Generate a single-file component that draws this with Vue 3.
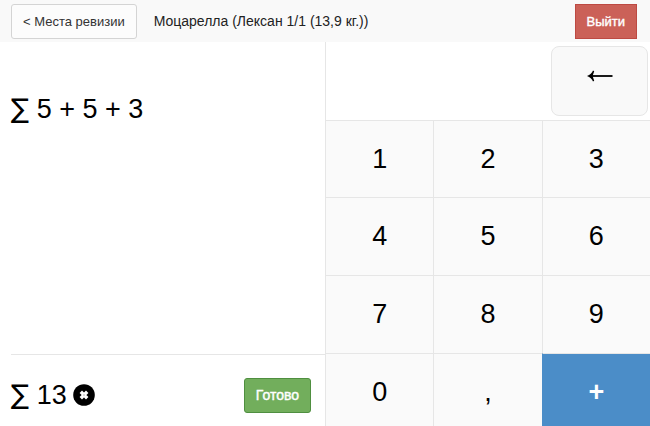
<template>
  <div class="page">
    <header class="topbar">
      <button class="btn btn-default" type="button">&lt; Места ревизии</button>
      <h1 class="title">Моцарелла (Лексан 1/1 (13,9 кг.))</h1>
      <button class="btn btn-danger" type="button">Выйти</button>
    </header>

    <main class="calc">
      <section class="display">
        <p class="expression"><span class="sigma">∑</span> {{ expression }}</p>
        <div class="result">
          <span><span class="sigma">∑</span> {{ total }}</span>
          <button class="clear" type="button" aria-label="Очистить" @click="clear">
            <svg viewBox="0 0 22 22" width="22" height="22">
              <circle cx="11" cy="11" r="10.8" />
              <path d="M7.8 7.8l6.4 6.4M14.2 7.8l-6.4 6.4" stroke="#fff" stroke-width="3.4" />
              <circle cx="11" cy="11" r="0.7" fill="#999" />
            </svg>
          </button>
          <button class="btn btn-success" type="button">Готово</button>
        </div>
      </section>

      <section class="keypad">
        <div class="keypad-top">
          <button class="backspace" type="button" aria-label="Стереть" @click="backspace">
            <svg viewBox="0 0 26 12" width="26" height="12">
              <path d="M4 6h21.5" stroke="#000" stroke-width="1.8" />
              <path d="M0 6C3 5 5 3 6 0.6L7.2 1.2L5.6 6L7.2 10.8L6 11.4C5 9 3 7 0 6z" />
            </svg>
          </button>
        </div>
        <button
          v-for="key in keys"
          :key="key"
          :class="['key', { plus: key === '+' }]"
          type="button"
          @click="press(key)"
        >{{ key }}</button>
      </section>
    </main>
  </div>
</template>

<script setup>
import { ref, computed } from 'vue'

const keys = ['1', '2', '3', '4', '5', '6', '7', '8', '9', '0', ',', '+']
const terms = ref(['5', '5', '3'])

const expression = computed(() => terms.value.join(' + '))
const total = computed(() => {
  const sum = terms.value.reduce((acc, t) => acc + (Number(t.replace(',', '.')) || 0), 0)
  return String(sum).replace('.', ',')
})

function press(key) {
  const last = terms.value.length - 1
  if (key === '+') {
    if (terms.value[last]) terms.value.push('')
  } else if (key !== ',' || !terms.value[last].includes(',')) {
    terms.value[last] += key
  }
}

function backspace() {
  const last = terms.value.length - 1
  if (terms.value[last]) {
    terms.value[last] = terms.value[last].slice(0, -1)
  } else if (last > 0) {
    terms.value.pop()
  }
}

function clear() {
  terms.value = ['']
}
</script>

<style>
body {
  overflow: hidden;
}
</style>

<style scoped>
.page {
  min-height: 100vh;
  background: #fff;
  color: #000;
  font-family: "Liberation Sans", Arial, sans-serif;
}

button {
  font-family: inherit;
  cursor: pointer;
}

.topbar {
  display: flex;
  align-items: center;
  box-sizing: border-box;
  height: 42px;
  padding: 0 13px 0 11px;
  background: #f9f9f9;
}

.title {
  flex: 1;
  margin: 0 0 0 17px;
  font-size: 14px;
  font-weight: normal;
  color: #222;
}

.btn {
  box-sizing: border-box;
  height: 35px;
  padding: 0 11px;
  border: 1px solid;
  border-radius: 3px;
  font-size: 13px;
}

.btn-default {
  background: #fcfcfc;
  border-color: #d4d4d4;
  color: #333;
}

.btn-danger {
  background: #cb6158;
  border-color: #bd4a43;
  border-radius: 0;
  color: #fff;
  -webkit-text-stroke: 0.4px #fff;
}

.btn-success {
  margin-left: auto;
  background: #72ae5c;
  border-color: #4f8f40;
  color: #fff;
  font-size: 14px;
  -webkit-text-stroke: 0.4px #fff;
}

.calc {
  display: grid;
  grid-template-columns: 1fr 1fr;
}

.display {
  display: flex;
  flex-direction: column;
  padding-left: 11px;
  font-size: 27px;
}

.expression {
  flex: 1;
  margin: 0;
  padding-top: 51px;
  line-height: 32px;
}

.sigma {
  font-family: "DejaVu Sans", sans-serif;
}

.result {
  display: flex;
  align-items: center;
  box-sizing: border-box;
  height: 77px;
  padding: 4px 14px 0 0;
  border-top: 1px solid #e6e6e6;
}

.clear {
  display: flex;
  margin-left: 6px;
  padding: 0;
  border: 0;
  background: none;
}

.keypad {
  display: grid;
  grid-template-columns: repeat(3, 1fr);
  grid-template-rows: 78px 77px 78px 78px 78px;
}

.keypad-top {
  grid-column: 1 / -1;
  display: flex;
  justify-content: flex-end;
  box-sizing: border-box;
  padding: 4px 2px 4px 0;
  border-left: 1px solid #e6e6e6;
}

.backspace {
  display: flex;
  align-items: center;
  justify-content: center;
  width: 30%;
  padding: 0 0 10px;
  border: 1px solid #e6e6e6;
  border-radius: 8px;
  background: #f9f9f9;
}

.key {
  padding: 0;
  border: 0;
  border-top: 1px solid #e6e6e6;
  border-left: 1px solid #e6e6e6;
  background: #fafafa;
  color: #000;
  font-size: 27px;
}

.plus {
  border-left-color: #4b8dc8;
  background: #4b8dc8;
  color: #fff;
  font-weight: bold;
}
</style>
